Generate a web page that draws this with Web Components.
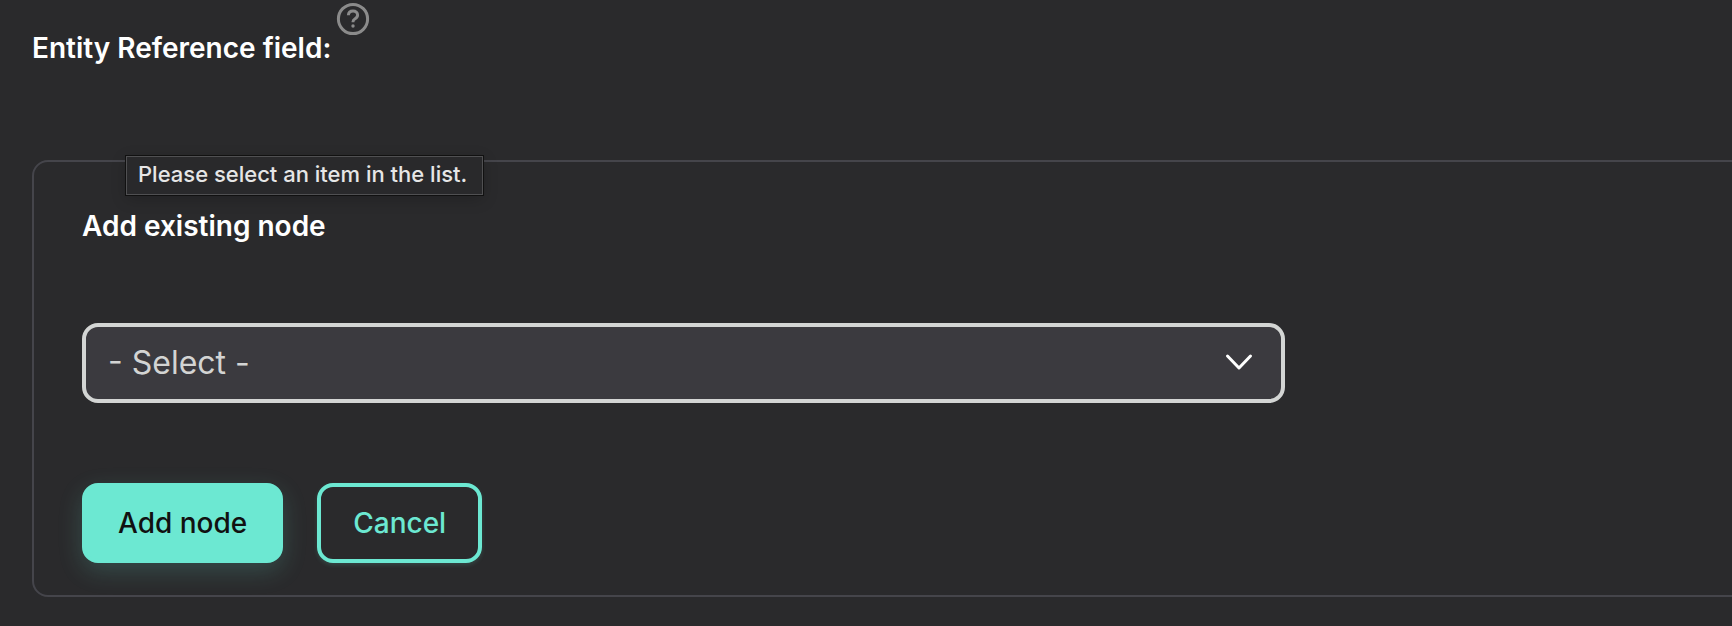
<!DOCTYPE html>
<html lang="en">
<head>
<meta charset="utf-8">
<title>Entity Reference field</title>
<style>
  body { margin: 0; background: #2a2a2c; color: #fff; font-family: Inter, sans-serif; overflow-x: hidden; }
</style>
</head>
<body>
<field-section>
  <field-heading slot="heading">Entity Reference field:</field-heading>
  <node-panel heading="Add existing node">
    <hint-tip slot="tip">Please select an item in the list.</hint-tip>
    <node-select label="Add existing node"></node-select>
    <action-button slot="actions" variant="primary">Add node</action-button>
    <action-button slot="actions">Cancel</action-button>
  </node-panel>
</field-section>
<script>
  class BaseElement extends HTMLElement {
    connectedCallback() {
      if (this.shadowRoot) return;
      this.attachShadow({ mode: 'open' }).innerHTML = this.render();
    }
  }

  customElements.define('field-section', class extends BaseElement {
    render() {
      return `<style>
        :host { display: block; padding: 0 0 30px 32px; }
        main { display: flex; flex-direction: column; gap: 92px; }
      </style>
      <main><slot name="heading"></slot><slot></slot></main>`;
    }
  });

  customElements.define('field-heading', class extends BaseElement {
    render() {
      return `<style>
        :host { display: flex; align-items: flex-start; gap: 5px; padding-top: 2px; }
        h4 { margin: 0; padding-top: 26px; font-size: 28px; line-height: 40px; font-weight: 600; }
        button { margin: 0; padding: 0; border: 0; background: none; color: #8b8b8b; display: flex; }
        svg { width: 34px; height: 34px; }
      </style>
      <h4><slot></slot></h4>
      <button type="button" aria-label="Help">
        <svg viewBox="0 0 34 34" fill="none" stroke="currentColor" stroke-width="3">
          <circle cx="17" cy="17" r="14.6"/>
          <path d="M12.400 13.200C12.500 10.400 14.400 9 17 9c2.700 0 4.600 1.600 4.600 4 0 1.800-1 2.800-2.500 3.700-1.500.9-2.100 1.500-2.100 3.100v.4" stroke-width="3"/>
          <circle cx="17" cy="24" r="1.700" fill="currentColor" stroke="none"/>
        </svg>
      </button>`;
    }
  });

  customElements.define('node-panel', class extends BaseElement {
    render() {
      return `<style>
        :host { display: block; position: relative; margin-right: -32px; border: 2px solid #45454b; border-radius: 16px; padding: 44px 48px 32px; }
        h4 { margin: 0 0 76px; font-size: 28px; line-height: 41px; font-weight: 600; }
        .actions { display: flex; gap: 34px; margin-top: 80px; }
      </style>
      <section>
        <h4>${this.getAttribute('heading')}</h4>
        <slot></slot>
        <div class="actions"><slot name="actions"></slot></div>
      </section>
      <slot name="tip"></slot>`;
    }
  });

  customElements.define('hint-tip', class extends BaseElement {
    render() {
      return `<style>
        :host { position: absolute; left: 92px; top: -6px; box-sizing: border-box; padding: 0 15px 2px 11px;
          border: 1px solid #505052; outline: 1px solid #111; background: #29292b; color: #e6e6e6;
          font-size: 22px; line-height: 35px; font-weight: 500; white-space: nowrap;
          box-shadow: 0 4px 16px rgba(0,0,0,.2); }
      </style>
      <span role="tooltip"><slot></slot></span>`;
    }
  });

  customElements.define('node-select', class extends BaseElement {
    render() {
      return `<style>
        :host { display: block; position: relative; max-width: 1203px; }
        select { appearance: none; display: block; box-sizing: border-box; width: 100%; height: 80px; margin: 0;
          padding: 0 76px 0 22px; border: 4px solid #d3d5d4; border-radius: 16px; background: #3b3a3f;
          color: #d3d4d3; font: 400 32px/40px Inter, sans-serif; }
        svg { position: absolute; right: 32px; top: 50%; margin-top: -10px; width: 28px; height: 18px; pointer-events: none; }
      </style>
      <select aria-label="${this.getAttribute('label')}" required><option value="">- Select -</option></select>
      <svg viewBox="0 0 28 18" fill="none" stroke="#fff" stroke-width="3" stroke-linecap="round" stroke-linejoin="round"><path d="M2.500 3l11.500 12 11.500-12"/></svg>`;
    }
  });

  customElements.define('action-button', class extends BaseElement {
    render() {
      return `<style>
        :host { display: block; }
        button { display: block; box-sizing: border-box; height: 80px; margin: 0; padding: 0 32px;
          border: 4px solid #6ce8d2; border-radius: 16px; background: transparent; color: #6ce8d2;
          font: 500 28px/40px Inter, sans-serif; box-shadow: 0 2px 4px rgba(108,232,210,.15); }
        :host([variant="primary"]) button { background: #6ce8d2; color: #111; box-shadow: 0 8px 24px rgba(108,232,210,.18); }
      </style>
      <button type="button"><slot></slot></button>`;
    }
  });
</script>
</body>
</html>
